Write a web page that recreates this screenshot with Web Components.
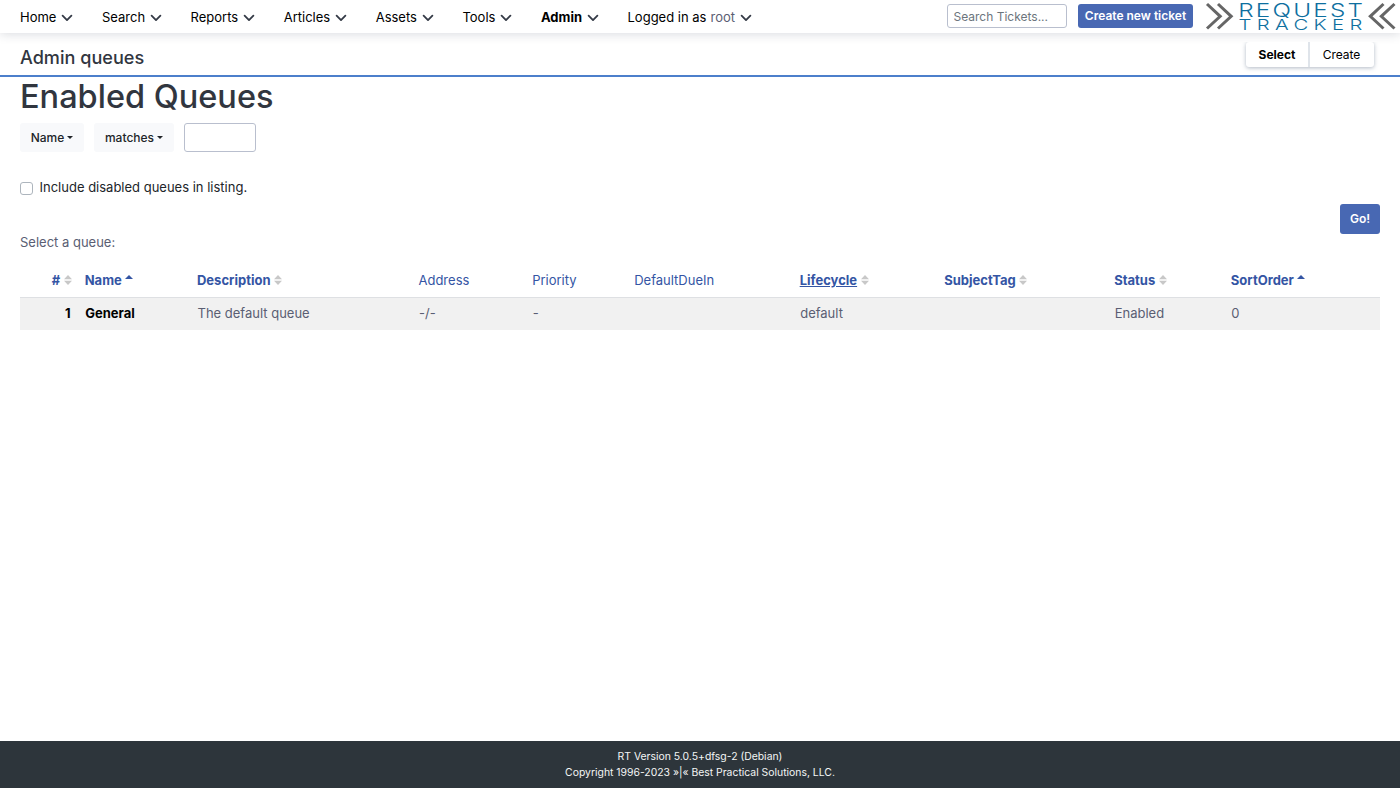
<!DOCTYPE html>
<html lang="en">
<head>
<meta charset="utf-8">
<title>Admin queues</title>
<style>
  html, body { height: 100%; }
  body {
    margin: 0;
    font-family: Inter, "Liberation Sans", sans-serif;
    font-size: 13px;
    line-height: 20px;
    color: #5a5e73;
    background: #fff;
  }
</style>
</head>
<body>
<rt-page>
  <rt-topbar slot="top">
    <rt-menu-item>Home</rt-menu-item>
    <rt-menu-item>Search</rt-menu-item>
    <rt-menu-item>Reports</rt-menu-item>
    <rt-menu-item>Articles</rt-menu-item>
    <rt-menu-item>Assets</rt-menu-item>
    <rt-menu-item>Tools</rt-menu-item>
    <rt-menu-item active>Admin</rt-menu-item>
    <rt-menu-item user="root">Logged in as</rt-menu-item>
  </rt-topbar>
  <rt-title-bar slot="top" heading="Admin queues"></rt-title-bar>
  <rt-queue-filter></rt-queue-filter>
  <rt-queue-table></rt-queue-table>
  <rt-footer slot="footer"></rt-footer>
</rt-page>

<script>
const define = (name, html, setup) => {
  const template = document.createElement("template");
  template.innerHTML = html;

  window.customElements.define(name, class extends HTMLElement {
    constructor() {
      super();
      this.attachShadow({ mode: "open" });
      this.shadowRoot.appendChild(template.content.cloneNode(true));
    }

    connectedCallback() {
      if (setup) setup(this, this.shadowRoot);
    }
  });
};

define("rt-page", `
  <style>
    :host { display: flex; flex-direction: column; height: 100vh; overflow: hidden; }
    main { flex: 1; padding: 0 20px; }
  </style>
  <slot name="top"></slot>
  <main><slot></slot></main>
  <slot name="footer"></slot>
`);

define("rt-button", `
  <style>
    :host { display: inline-block; }
    button {
      display: block;
      box-sizing: border-box;
      width: 100%;
      height: 100%;
      padding: 0;
      border: 0;
      border-radius: 3px;
      background: #4868b3;
      color: #fff;
      font: 600 12px/1 Inter, "Liberation Sans", sans-serif;
    }
  </style>
  <button type="button"><slot></slot></button>
`);

define("rt-menu-item", `
  <style>
    :host { display: flex; align-items: center; color: #000; white-space: nowrap; }
    :host([active]) { font-weight: 700; }
    .user { color: #5a5e73; }
    .user:not(:empty) { margin-left: 4px; }
    svg { width: 12px; height: 8px; margin: 2px 0 0 5px; }
  </style>
  <slot></slot><span class="user"></span>
  <svg viewBox="0 0 12 8"><path d="M1.6 1.7 6 6.1l4.4-4.4" fill="none" stroke="#343a46" stroke-width="1.8" stroke-linecap="round" stroke-linejoin="round"/></svg>
`, (el, root) => {
  root.querySelector(".user").textContent = el.getAttribute("user") || "";
});

define("rt-logo", `
  <style>
    :host { display: block; width: 190px; height: 33px; }
    svg { display: block; overflow: visible; }
    text { font-family: Inter, "Liberation Sans", sans-serif; font-weight: 300; fill: #0e6f9f; }
    .arrows { fill: none; stroke: #666; stroke-width: 3; }
  </style>
  <svg width="190" height="36" viewBox="0 0 190 36">
    <g class="arrows">
      <path d="M1 4 14.2 16.3 1 28.5M12 4 25.2 16.3 12 28.5"/>
      <path d="M177.5 4 164.3 16.3 177.5 28.5M188.5 4 175.3 16.3 188.5 28.5"/>
    </g>
    <text transform="translate(32.2 16.6) scale(1.35 1)" font-size="18" textLength="92.5">REQUEST</text>
    <text transform="translate(32.5 30.2) scale(1.4 1)" font-size="14.5" textLength="88.5">TRACKER</text>
  </svg>
`);

define("rt-topbar", `
  <style>
    :host {
      display: flex;
      box-sizing: border-box;
      height: 33px;
      padding: 0 4px 0 20px;
      box-shadow: 0 1px 10px rgba(40, 50, 70, 0.18);
    }
    nav { display: flex; gap: 28.5px; flex: 1; padding-top: 1px; height: 31px; }
    input {
      box-sizing: border-box;
      width: 120px;
      height: 24px;
      margin: 4px 11px 0 0;
      padding: 0 6px 0 5.5px;
      border: 1px solid #b9bfce;
      border-radius: 3px;
      font: 12px Inter, "Liberation Sans", sans-serif;
    }
    input::placeholder { color: #6c757d; }
    rt-button { width: 115px; height: 24px; margin: 4px 13px 0 0; }
  </style>
  <nav><slot></slot></nav>
  <input type="text" placeholder="Search Tickets...">
  <rt-button>Create new ticket</rt-button>
  <rt-logo></rt-logo>
`);

define("rt-title-bar", `
  <style>
    :host {
      display: flex;
      justify-content: space-between;
      box-sizing: border-box;
      height: 44px;
      padding: 0 26px 0 20px;
      border-bottom: 2px solid #4c7fcb;
    }
    h1 { margin: 12px 0 0; font-size: 18.1px; line-height: 24px; font-weight: 500; color: #31363f; }
    .tabs {
      display: flex;
      height: 25px;
      margin-top: 9px;
      border-radius: 3px;
      background: #fff;
      box-shadow: 0 1px 4px rgba(60, 80, 110, 0.4);
      clip-path: inset(0 -8px -8px -8px);
      font-size: 12px;
      line-height: 26px;
      color: #000;
    }
    .tabs span { box-sizing: border-box; width: 64px; padding-right: 1px; text-align: center; }
    .tabs span:first-child { padding: 0; border-right: 2px solid #dfe4ea; font-weight: 700; }
  </style>
  <h1></h1>
  <div class="tabs"><span>Select</span><span>Create</span></div>
`, (el, root) => {
  root.querySelector("h1").textContent = el.getAttribute("heading");
});

define("rt-dropdown", `
  <style>
    :host {
      display: flex;
      align-items: center;
      justify-content: center;
      height: 29px;
      border-radius: 3px;
      background: #f8f9fb;
      color: #212529;
      font-size: 12px;
      font-weight: 500;
    }
    i { margin-left: 3px; border: 3px solid transparent; border-top-color: #212529; border-bottom: 0; }
  </style>
  <slot></slot><i></i>
`);

define("rt-queue-filter", `
  <style>
    :host { display: block; }
    h2 { margin: 0; font-size: 32.5px; line-height: 40px; font-weight: 500; color: #31363f; }
    .row { display: flex; gap: 10px; margin-top: 6px; }
    .name { width: 64px; }
    .op { width: 80px; }
    input[type=text] { box-sizing: border-box; width: 72px; height: 29px; margin: 0; border: 1px solid #b9bfce; border-radius: 3px; }
    label { display: flex; align-items: center; margin-top: 25px; color: #212529; }
    input[type=checkbox] {
      appearance: none;
      box-sizing: border-box;
      width: 13px;
      height: 13px;
      margin: 2px 6.5px 0 0;
      border: 1px solid #adb5bd;
      border-radius: 3px;
    }
    .submit { display: flex; justify-content: flex-end; margin-top: 7px; }
    rt-button { width: 40px; height: 30px; }
  </style>
  <h2>Enabled Queues</h2>
  <div class="row">
    <rt-dropdown class="name">Name</rt-dropdown>
    <rt-dropdown class="op">matches</rt-dropdown>
    <input type="text">
  </div>
  <label><input type="checkbox"><span>Include disabled queues in listing.</span></label>
  <div class="submit"><rt-button>Go!</rt-button></div>
`);

define("rt-column-head", `
  <style>
    :host { display: flex; align-items: center; color: #3455a4; white-space: nowrap; }
    :host([sort]) { font-weight: 670; }
    :host([hover]) span { text-decoration: underline; }
    svg { display: none; width: 8px; height: 10px; margin: 0 0 0 3.5px; }
    :host([sort=both]) .both, :host([sort=asc]) .asc { display: block; }
  </style>
  <span><slot></slot></span>
  <svg class="both" viewBox="0 0 8 10"><path d="M0 4.2 4 0l4 4.2zM0 5.8h8L4 10z" fill="#c8c8c8"/></svg>
  <svg class="asc" viewBox="0 0 8 10"><path d="M0 4 4 0l4 4z" fill="#3455a4"/></svg>
`);

define("rt-queue-table", `
  <style>
    :host { display: block; }
    p { margin: -2px 0 0; }
    .line {
      display: grid;
      grid-template-columns: 64.7px 112.3px 221.5px 113.7px 102px 165.5px 144.5px 170px 116.7px 1fr;
      align-items: center;
    }
    .head { box-sizing: border-box; height: 33px; margin-top: 12px; padding-bottom: 2px; }
    .body { box-sizing: border-box; height: 33px; padding-bottom: 2px; border-top: 1px solid #dee0e3; background: #f1f1f1; }
    .line > :first-child { justify-self: end; margin-right: 13px; }
    .body > b:first-child { margin-right: 14px; }
    b { color: #000; }
    .body > :not(:first-child) { padding-left: 0.5px; }
  </style>
  <p>Select a queue:</p>
  <div class="line head">
    <rt-column-head sort="both">#</rt-column-head>
    <rt-column-head sort="asc">Name</rt-column-head>
    <rt-column-head sort="both">Description</rt-column-head>
    <rt-column-head>Address</rt-column-head>
    <rt-column-head>Priority</rt-column-head>
    <rt-column-head>DefaultDueIn</rt-column-head>
    <rt-column-head sort="both" hover>Lifecycle</rt-column-head>
    <rt-column-head sort="both">SubjectTag</rt-column-head>
    <rt-column-head sort="both">Status</rt-column-head>
    <rt-column-head sort="asc">SortOrder</rt-column-head>
  </div>
  <div class="line body">
    <b>1</b>
    <b>General</b>
    <span>The default queue</span>
    <span>-/-</span>
    <span>-</span>
    <span></span>
    <span>default</span>
    <span></span>
    <span>Enabled</span>
    <span>0</span>
  </div>
`);

define("rt-footer", `
  <style>
    :host {
      display: block;
      box-sizing: border-box;
      height: 47px;
      padding-top: 8px;
      background: #2d353b;
      font-size: 10.4px;
      line-height: 16px;
      text-align: center;
    }
    div { color: #f4f5f5; }
  </style>
  <div>RT Version 5.0.5+dfsg-2 (Debian)</div>
  <div>Copyright 1996-2023 »|« Best Practical Solutions, LLC.</div>
`);
</script>
</body>
</html>
